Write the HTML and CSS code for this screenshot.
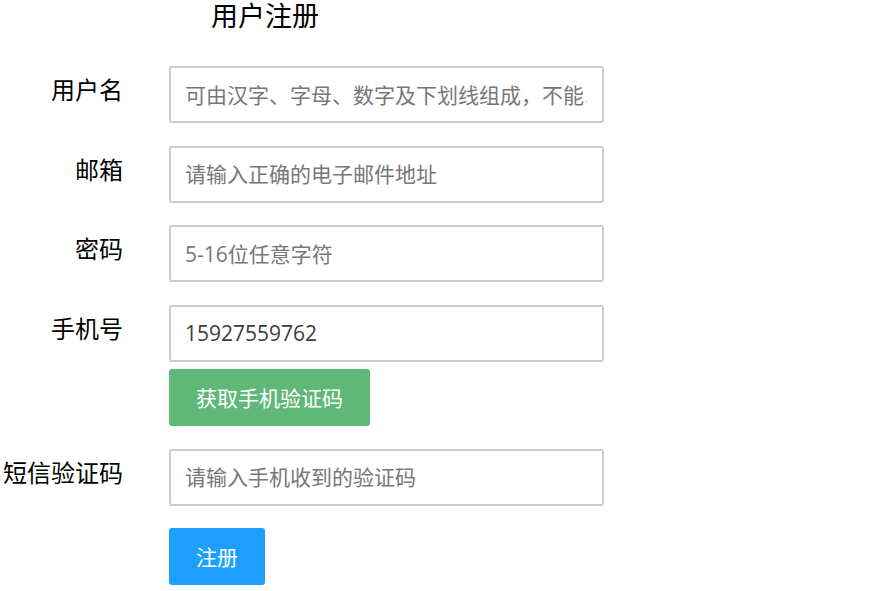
FILE: index.html
```html
<!DOCTYPE html>
<html lang="zh-CN">
<head>
    <meta charset="UTF-8">
    <meta name="viewport" content="width=device-width, initial-scale=1.0">
    <title>用户注册</title>
    <link rel="stylesheet" href="styles.css">
</head>
<body>
<div class="register">
    <h2 class="title">用户注册</h2>
    <form class="reg-form">
        <div class="form-item">
            <label class="form-label" for="username">用户名</label>
            <div class="input-block">
                <input class="form-input" id="username" placeholder="可由汉字、字母、数字及下划线组成，不能以数字开头">
            </div>
        </div>
        <div class="form-item">
            <label class="form-label" for="email">邮箱</label>
            <div class="input-block">
                <input class="form-input" id="email" placeholder="请输入正确的电子邮件地址">
            </div>
        </div>
        <div class="form-item">
            <label class="form-label" for="password">密码</label>
            <div class="input-block">
                <input class="form-input" id="password" placeholder="5-16位任意字符">
            </div>
        </div>
        <div class="form-item">
            <label class="form-label" for="phone">手机号</label>
            <div class="input-block">
                <input class="form-input" id="phone" value="15927559762">
                <button type="button" class="btn btn-green">获取手机验证码</button>
            </div>
        </div>
        <div class="form-item">
            <label class="form-label" for="smscode">短信验证码</label>
            <div class="input-block">
                <input class="form-input" id="smscode" placeholder="请输入手机收到的验证码">
            </div>
        </div>
        <div class="form-actions">
            <button type="button" class="btn btn-blue">注册</button>
        </div>
    </form>
</div>
</body>
</html>
```

FILE: styles.css
```css
body {
    margin: 0;
    padding: 0;
    background-color: #ffffff;
    font-family: "Noto Sans CJK SC", sans-serif;
    color: #000;
}

.register {
    width: 620px;
}

.title {
    width: 530px;
    margin: 0 0 36px 0;
    font-size: 27px;
    line-height: 30px;
    font-weight: normal;
    text-align: center;
}

.form-item {
    display: grid;
    grid-template-columns: 123px 435px;
    column-gap: 46px;
    margin-bottom: 22.5px;
}

.form-label {
    padding-top: 8px;
    font-size: 24px;
    line-height: 30px;
    text-align: right;
}

.input-block {
    display: flex;
    flex-direction: column;
    align-items: flex-start;
    gap: 7.5px;
}

.form-input {
    box-sizing: border-box;
    width: 100%;
    height: 57px;
    padding: 0 15px 0 14px;
    border: 2px solid #cccccc;
    border-radius: 3px;
    font-family: "Open Sans", "Noto Sans CJK SC", sans-serif;
    font-size: 21px;
    color: #3c3c3c;
    outline: none;
}

.form-input::placeholder {
    color: #777777;
}

.btn {
    height: 57px;
    padding: 0 27px;
    border: none;
    border-radius: 3px;
    font-family: "Noto Sans CJK SC", sans-serif;
    font-size: 21px;
    line-height: 57px;
    color: #ffffff;
    cursor: pointer;
}

.btn-green {
    background-color: #5fb878;
}

.btn-blue {
    background-color: #1e9fff;
}

.form-actions {
    padding-left: 169px;
}
```
